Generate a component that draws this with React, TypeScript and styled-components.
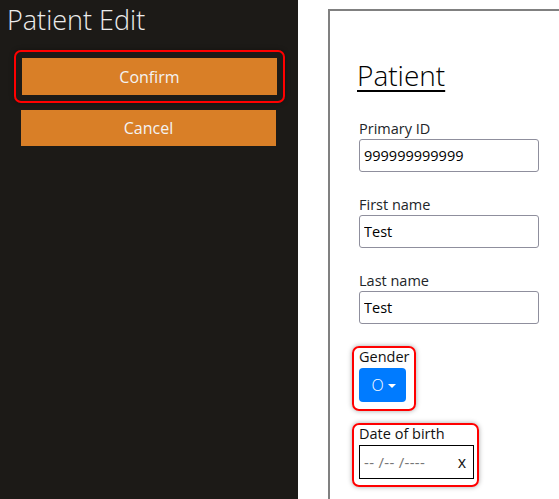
import React from 'react';
import styled, { createGlobalStyle } from 'styled-components';

const GlobalStyle = createGlobalStyle`
  html, body {
    margin: 0;
    padding: 0;
    background: #ffffff;
  }
  body {
    font-family: 'Open Sans', 'Noto Sans', sans-serif;
    color: #212529;
  }
`;

const Page = styled.div`
  display: flex;
  width: 559px;
  height: 499px;
  overflow: hidden;
`;

const Sidebar = styled.aside`
  width: 298px;
  flex-shrink: 0;
  background: #1c1a17;
  padding: 0 22px 0 21px;
  box-sizing: border-box;
`;

const SidebarTitle = styled.h1`
  margin: 0 0 10px -14px;
  font-size: 27px;
  font-weight: 300;
  line-height: 40px;
  color: #ececec;
  white-space: nowrap;
`;

const Highlight = styled.div<{ $inset?: string }>`
  display: inline-flex;
  flex-direction: column;
  align-items: flex-start;
  border: 2px solid #ff0000;
  border-radius: 7px;
  box-shadow: 0 0 5px rgba(0, 0, 0, 0.35);
  padding: ${(p) => p.$inset || '6px'};
  margin-left: -7px;
`;

const SideButton = styled.button`
  display: block;
  width: 255px;
  height: 37px;
  border: none;
  background: #d97f27;
  color: #f3f3f3;
  font-family: 'Open Sans', sans-serif;
  font-size: 16px;
  cursor: pointer;
  padding: 0;
`;

const CancelButton = styled(SideButton)`
  margin-top: 7px;
  height: 36px;
`;

const Main = styled.main`
  flex: 1;
  padding: 9px 0 0 30px;
  min-width: 0;
`;

const Card = styled.section`
  border-left: 2px solid #808080;
  border-top: 2px solid #808080;
  height: 100%;
  padding: 46px 0 0 29px;
  box-sizing: border-box;
`;

const Heading = styled.h2`
  margin: 0 0 25px -2px;
  font-size: 28px;
  font-weight: 300;
  line-height: 36px;
  color: #000;
  text-decoration: underline;
  text-decoration-thickness: 2px;
  text-underline-offset: 4px;
`;

const Field = styled.div<{ $gap?: number }>`
  display: flex;
  flex-direction: column;
  align-items: flex-start;
  margin-top: ${(p) => p.$gap ?? 22}px;
`;

const Label = styled.label`
  font-size: 14.5px;
  line-height: 21px;
  color: #212529;
`;

const HighLabel = styled(Label)`
  line-height: 18px;
  margin: 0 0 2px;
  color: #111;
`;

const TextInput = styled.input`
  width: 180px;
  height: 33px;
  box-sizing: border-box;
  border: 1px solid #8f8f9d;
  border-radius: 3px;
  padding: 0 4px;
  font-family: 'Open Sans', sans-serif;
  font-size: 14.5px;
  color: #000;
  outline: none;
`;

const GenderButton = styled.button`
  display: flex;
  align-items: center;
  justify-content: center;
  gap: 4px;
  width: 47px;
  height: 34px;
  border: none;
  border-radius: 4px;
  background: #007bff;
  color: #fff;
  font-family: 'Open Sans', sans-serif;
  font-size: 16px;
  font-weight: 300;
  padding: 0 0 0 2px;
`;

const Caret = styled.span`
  width: 0;
  height: 0;
  border-left: 4px solid transparent;
  border-right: 4px solid transparent;
  border-top: 4px solid #fff;
  margin-top: 1px;
`;

const DateBox = styled.div`
  display: flex;
  align-items: center;
  justify-content: space-between;
  width: 115px;
  height: 34px;
  box-sizing: border-box;
  border: 1px solid #000;
  padding: 0 7px 0 4px;
  background: #fff;
`;

const DatePlaceholder = styled.span`
  font-size: 15px;
  color: #767676;
  letter-spacing: 0.3px;
`;

const ClearMark = styled.span`
  font-size: 16px;
  color: #111;
`;

const App = () => {
  return (
    <>
      <GlobalStyle />
      <Page>
        <Sidebar>
          <SidebarTitle>Patient Edit</SidebarTitle>
          <Highlight>
            <SideButton type="button">Confirm</SideButton>
          </Highlight>
          <CancelButton type="button">Cancel</CancelButton>
        </Sidebar>
        <Main>
          <Card>
            <Heading>Patient</Heading>
            <Field $gap={0}>
              <Label>Primary ID</Label>
              <TextInput defaultValue="999999999999" />
            </Field>
            <Field>
              <Label>First name</Label>
              <TextInput defaultValue="Test" />
            </Field>
            <Field>
              <Label>Last name</Label>
              <TextInput defaultValue="Test" />
            </Field>
            <Field>
              <Highlight $inset="0 4px 7px 5px">
                <HighLabel>Gender</HighLabel>
                <GenderButton type="button">
                  O<Caret />
                </GenderButton>
              </Highlight>
            </Field>
            <Field $gap={12}>
              <Highlight $inset="0 3px 6px 5px">
                <HighLabel>Date of birth</HighLabel>
                <DateBox>
                  <DatePlaceholder>-- /-- /----</DatePlaceholder>
                  <ClearMark>x</ClearMark>
                </DateBox>
              </Highlight>
            </Field>
          </Card>
        </Main>
      </Page>
    </>
  );
};

export default App;
